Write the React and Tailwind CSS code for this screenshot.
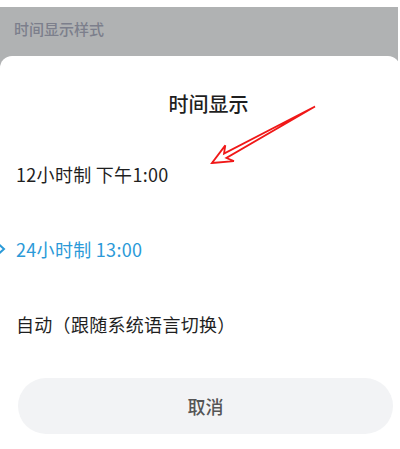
import React from "react";

const options = [
  { id: 12, label: "12小时制 下午1:00" },
  { id: 24, label: "24小时制 13:00" },
  { id: 0, label: "自动（跟随系统语言切换）" },
];

// red hand-drawn annotation arrow pointing at the 12h option
const Arrow = () => (
  <svg
    className="absolute left-0 top-0 pointer-events-none"
    width="400"
    height="449"
    viewBox="0 0 400 449"
  >
    <polygon
      points="212,163 233.9,161.2 226.4,158 315,106.5 224,153.6 225.3,145.4"
      fill="none"
      stroke="#f01818"
      strokeWidth="1.8"
      strokeLinejoin="miter"
    />
  </svg>
);

export default function App() {
  const selected = 24;

  return (
    <div
      className="relative w-[400px] h-[449px] overflow-hidden bg-white pt-[7px]"
      style={{ fontFamily: '"Noto Sans CJK SC", "Noto Sans", sans-serif' }}
    >
      <div className="bg-[#b0b2b3] h-full mr-[2px]">
        <div className="h-[49px] flex items-center pl-[14px] pb-[14px] pt-[10px]">
          <span className="text-[15px] font-medium text-[#7c7f8c]">时间显示样式</span>
        </div>

        <div className="bg-white rounded-t-[12px] h-full pt-[34px] -mr-[2px]">
          <h2 className="h-[28px] text-center text-[20px] leading-[28px] font-medium text-[#1f1f1f] pl-[17px]">
            时间显示
          </h2>

          <div className="mt-[18px] flex flex-col">
            {options.map((o) => {
              const active = o.id === selected;
              return (
                <div key={o.id} className="relative h-[75px] flex items-center pl-[16px]">
                  {active && (
                    <svg
                      className="absolute left-[-3px] top-1/2 -translate-y-1/2"
                      width="9"
                      height="12"
                      viewBox="0 0 9 12"
                    >
                      <path d="M2 1.5 L7 6 L2 10.5" fill="none" stroke="#2b9ad8" strokeWidth="2" />
                    </svg>
                  )}
                  <span
                    className={`text-[18px] leading-[24px] tracking-[0.3px] ${
                      active ? "text-[#2b9ad8]" : "text-[#1f1f1f]"
                    }`}
                  >
                    {o.label}
                  </span>
                </div>
              );
            })}
          </div>

          <button className="mt-[17px] ml-[18px] w-[375px] h-[56px] rounded-full bg-[#f2f3f5] text-[18px] text-[#555555] font-medium flex items-center justify-center">
            取消
          </button>
        </div>
      </div>
      <Arrow />
    </div>
  );
}
